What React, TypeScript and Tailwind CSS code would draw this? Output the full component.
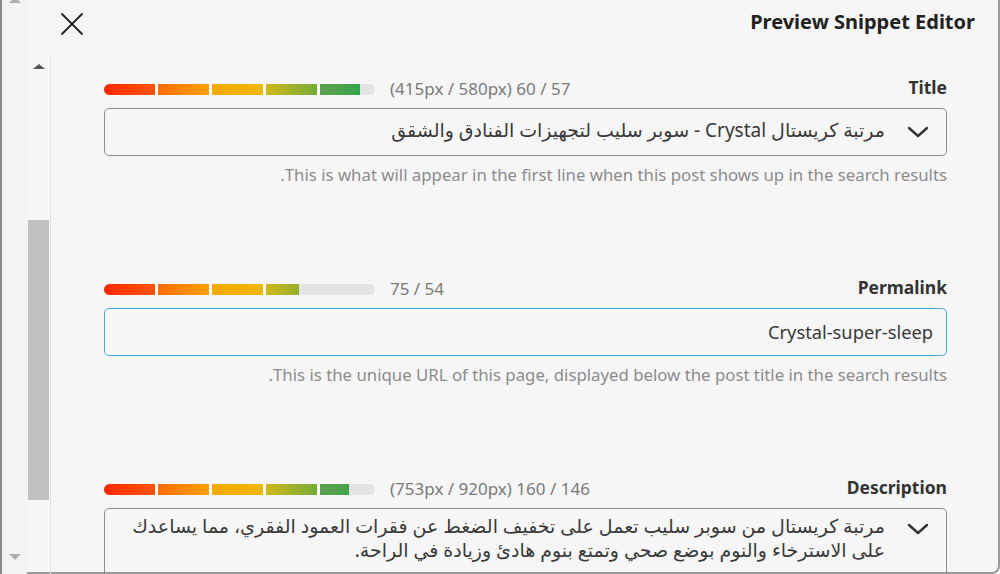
import React from "react";

const segments = [
  "bg-gradient-to-r from-[#ff2400] to-[#ff5200]",
  "bg-gradient-to-r from-[#ff6a00] to-[#ffa10a]",
  "bg-gradient-to-r from-[#f5a900] to-[#efb70c]",
  "bg-gradient-to-r from-[#d2b616] to-[#72ac35]",
  "bg-gradient-to-r from-[#5fa04f] to-[#12a64a]",
];

const ScoreBar = ({ fill }: { fill: number }) => (
  <div className="flex h-[11px] w-[271px] overflow-hidden rounded-full bg-[#e4e4e4]">
    <div className="flex h-full shrink-0 gap-[3px] overflow-hidden bg-white" style={{ width: fill }}>
      {segments.map((s, i) => (
        <div key={i} className={`h-full w-[51px] shrink-0 ${s}`} />
      ))}
    </div>
  </div>
);

const Chevron = () => (
  <svg width="22" height="12" viewBox="0 0 22 12" className="shrink-0 text-[#333]">
    <path d="M2 2 L11 10 L20 2" fill="none" stroke="currentColor" strokeWidth="2.4" strokeLinecap="round" strokeLinejoin="round" />
  </svg>
);

interface FieldProps {
  label: string;
  counter: string;
  fill: number;
  help?: string;
  children: React.ReactNode;
}

const Field = ({ label, counter, fill, help, children }: FieldProps) => (
  <div className="flex h-[200px] flex-col">
    <div className="flex h-[16px] items-center justify-between">
      <div className="flex items-center gap-[15px]">
        <ScoreBar fill={fill} />
        <span className="text-[17px] text-[#7a7a7a]">{counter}</span>
      </div>
      <span className="-mt-[4px] text-[17.5px] font-bold text-[#333]">{label}</span>
    </div>
    {children}
    {help && (
      <p dir="rtl" className="mt-[9px] text-[16.8px] leading-[20px] text-[#8c8c8c]">
        {help}
      </p>
    )}
  </div>
);

export default function App() {
  return (
    <div
      className="flex h-[574px] w-[1000px] overflow-hidden bg-[#f6f6f7] text-[#444]"
      style={{ fontFamily: '"Noto Sans", "DejaVu Sans", sans-serif' }}
    >
      {/* outer scrollbar */}
      <div className="flex w-[27px] shrink-0 flex-col items-center justify-between border-l-2 border-[#8a8a8a] bg-[#f3f3f3] pb-[14px]">
        <div className="h-0 w-0 -translate-y-[3px] border-x-[6px] border-b-[6px] border-x-transparent border-b-[#b0b0b0]" />
        <div className="h-0 w-0 border-x-[6px] border-t-[6px] border-x-transparent border-t-[#b0b0b0]" />
      </div>

      <div className="flex flex-1 flex-col rounded-br-[8px] border-r-2 border-b-2 border-[#9a9a9a]">
        {/* header */}
        <div className="flex h-[55px] shrink-0 items-center justify-between pr-[23px] pl-[33px]">
          <svg width="24" height="24" viewBox="0 0 24 24" className="-mt-[8px] text-[#222]">
            <path d="M2 2 L22 22 M22 2 L2 22" stroke="currentColor" strokeWidth="1.8" strokeLinecap="round" />
          </svg>
          <h1 className="-mt-[12px] text-[20px] font-bold text-[#222]">Preview Snippet Editor</h1>
        </div>

        <div className="flex flex-1">
          {/* inner scrollbar */}
          <div className="flex w-[24px] shrink-0 flex-col items-center border-r border-[#e3e3e3] pt-[9px] pb-[14px]">
            <div className="h-0 w-0 border-x-[6px] border-b-[5px] border-x-transparent border-b-[#555]" />
            <div className="mt-[151px] h-[280px] w-[21px] bg-[#c1c1c1]" />
            <div className="mt-auto h-0 w-0 border-x-[6px] border-t-[5px] border-x-transparent border-t-[#555]" />
          </div>

          {/* content */}
          <div className="flex flex-1 flex-col pt-[26px] pr-[51px] pl-[53px]">
            <Field
              label="Title"
              counter="(415px / 580px) 60 / 57"
              fill={256}
              help="This is what will appear in the first line when this post shows up in the search results."
            >
              <div
                dir="rtl"
                className="mt-[11px] flex h-[48px] items-center gap-[22px] rounded-[5px] border border-[#8f8f8f] pr-[17px] pl-[14px] text-[19px] text-[#3a3a3a]"
              >
                <Chevron />
                <span className="-mt-[3px]">مرتبة كريستال Crystal - سوبر سليب لتجهيزات الفنادق والشقق</span>
              </div>
            </Field>

            <Field
              label="Permalink"
              counter="75 / 54"
              fill={195}
              help="This is the unique URL of this page, displayed below the post title in the search results."
            >
              <div className="mt-[11px] flex h-[48px] items-center justify-end rounded-[5px] border-[1.5px] border-[#4aa8dc] pr-[13px] text-[18.3px] text-[#3a3a3a]">
                Crystal-super-sleep
              </div>
            </Field>

            <Field label="Description" counter="(753px / 920px) 160 / 146" fill={245}>
              <div
                dir="rtl"
                className="mt-[11px] flex h-[80px] items-start gap-[22px] rounded-[5px] border border-[#8f8f8f] pt-[5px] pr-[17px] pl-[14px] text-[19px] leading-[24px] text-[#3a3a3a]"
              >
                <div className="pt-[9px]">
                  <Chevron />
                </div>
                <p className="whitespace-nowrap">
                  مرتبة كريستال من سوبر سليب تعمل على تخفيف الضغط عن فقرات العمود الفقري، مما يساعدك
                  <br />
                  على الاسترخاء والنوم بوضع صحي وتمتع بنوم هادئ وزيادة في الراحة.
                </p>
              </div>
            </Field>
          </div>
        </div>
      </div>
    </div>
  );
}
